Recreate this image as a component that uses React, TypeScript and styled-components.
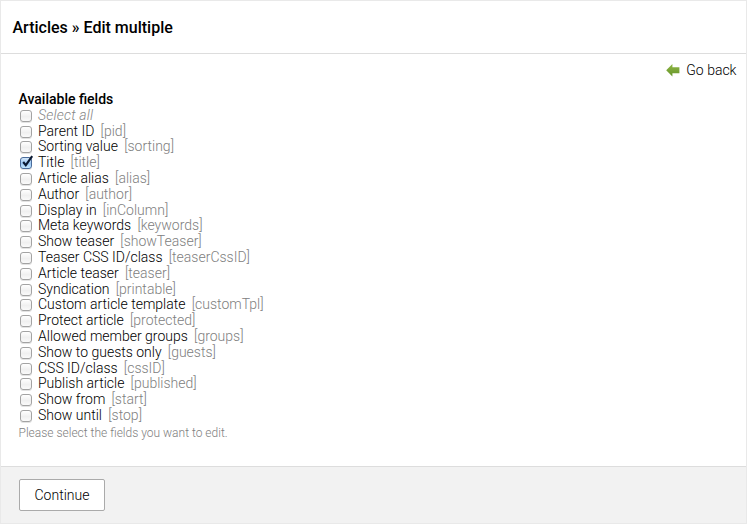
import React, { useState } from 'react';
import styled, { createGlobalStyle } from 'styled-components';

const GlobalStyle = createGlobalStyle`
  * { box-sizing: border-box; }
  html, body { margin: 0; padding: 0; }
  body {
    background: #fff;
    color: #000;
    font: 300 14px/15.8px Roboto, sans-serif;
  }
`;

const Page = styled.div`
  display: flex;
  flex-direction: column;
  width: 747px;
  height: 524px;
  border: 1px solid #e9e9e9;
`;

const Header = styled.header`
  display: flex;
  align-items: center;
  height: 53px;
  padding: 2px 0 0 11.5px;
  border-bottom: 1px solid #ddd;
`;

const Heading = styled.h1`
  margin: 0;
  font-size: 16px;
  font-weight: 500;
  line-height: 20px;
`;

const Toolbar = styled.nav`
  display: flex;
  justify-content: flex-end;
  padding: 8px 9.5px 0 0;
  height: 37px;
`;

const BackLink = styled.a`
  display: flex;
  align-items: flex-start;
  gap: 6px;
  color: #000;
  line-height: 16px;
  text-decoration: none;
  svg { margin-top: 2px; }
`;

const Fields = styled.fieldset`
  flex: 1;
  margin: 0;
  padding: 0 0 0 17.5px;
  border: 0;
`;

const Legend = styled.h2`
  margin: 0;
  height: 15.8px;
  font-size: 14px;
  font-weight: 500;
  line-height: 16px;
`;

const Row = styled.label`
  display: flex;
  align-items: flex-start;
  height: 15.8px;
  padding-left: 1.5px;
  white-space: pre;
`;

const Box = styled.input<{ $on: boolean }>`
  appearance: none;
  flex: none;
  width: 12px;
  height: 12px;
  margin: 3px 6px 0 0;
  border: 1px solid ${(p) => (p.$on ? '#4a6c9b' : '#a3a3a3')};
  border-radius: 3px;
  background: ${(p) =>
    p.$on
      ? 'linear-gradient(#d3e6f9, #9cc8f4 55%, #c5e8ff)'
      : 'linear-gradient(#fff, #f0f0f0 55%, #fafafa)'};
  box-shadow: 0 1px 0 #e3e3e3;
`;

const BoxWrap = styled.span`
  position: relative;
  display: flex;
`;

const Tick = styled.svg`
  position: absolute;
  left: 1px;
  top: 0;
  pointer-events: none;
`;

const Label = styled.span<{ $all?: boolean }>`
  padding-top: 1px;
  color: ${(p) => (p.$all ? '#858585' : '#000')};
  font-style: ${(p) => (p.$all ? 'italic' : 'normal')};
  letter-spacing: ${(p) => (p.$all ? '0.2px' : 'normal')};
`;

const Key = styled.span`
  padding-top: 1px;
  margin-left: 6.2px;
  color: #808080;
`;

const Hint = styled.p`
  margin: 2px 0 0;
  color: #808080;
  font-size: 12px;
  line-height: 16px;
`;

const Footer = styled.footer`
  display: flex;
  align-items: flex-start;
  height: 57px;
  padding: 12px 0 0 18px;
  border-top: 1px solid #ddd;
  background: #f2f2f2;
`;

const Submit = styled.button`
  width: 86px;
  height: 32px;
  padding: 0;
  border: 1px solid #aaa;
  border-radius: 2px;
  background: #fff;
  color: #000;
  font: 300 14px/16px Roboto, sans-serif;
`;

const fields: [string, string][] = [
  ['Parent ID', 'pid'],
  ['Sorting value', 'sorting'],
  ['Title', 'title'],
  ['Article alias', 'alias'],
  ['Author', 'author'],
  ['Display in', 'inColumn'],
  ['Meta keywords', 'keywords'],
  ['Show teaser', 'showTeaser'],
  ['Teaser CSS ID/class', 'teaserCssID'],
  ['Article teaser', 'teaser'],
  ['Syndication', 'printable'],
  ['Custom article template', 'customTpl'],
  ['Protect article', 'protected'],
  ['Allowed member groups', 'groups'],
  ['Show to guests only', 'guests'],
  ['CSS ID/class', 'cssID'],
  ['Publish article', 'published'],
  ['Show from', 'start'],
  ['Show until', 'stop'],
];

function Checkbox({ checked, onChange }: { checked: boolean; onChange: () => void }) {
  return (
    <BoxWrap>
      <Box type="checkbox" $on={checked} checked={checked} onChange={onChange} />
      {checked && (
        <Tick width="13" height="14" viewBox="0 0 13 14">
          <path d="M2.2 8 4.8 11.2 11.2 2.2" fill="none" stroke="#0b1a33" strokeWidth="2.1" />
        </Tick>
      )}
    </BoxWrap>
  );
}

export default function App() {
  const [selected, setSelected] = useState<string[]>(['title']);
  const all = selected.length === fields.length;
  const toggle = (key: string) =>
    setSelected((s) => (s.includes(key) ? s.filter((k) => k !== key) : [...s, key]));

  return (
    <Page>
      <GlobalStyle />
      <Header>
        <Heading>Articles » Edit multiple</Heading>
      </Header>
      <Toolbar>
        <BackLink href="#">
          <svg width="14" height="13" viewBox="0 0 14 13">
            <defs>
              <linearGradient id="leaf" x2="0" y2="1">
                <stop stopColor="#8fb544" />
                <stop offset="1" stopColor="#66962a" />
              </linearGradient>
            </defs>
            <path d="M.2 6.2 6.4 0v3.2h7v6h-7v3.2z" fill="url(#leaf)" />
          </svg>
          Go back
        </BackLink>
      </Toolbar>
      <Fields>
        <Legend>Available fields</Legend>
        <Row>
          <Checkbox checked={all} onChange={() => setSelected(all ? [] : fields.map((f) => f[1]))} />
          <Label $all>Select all</Label>
        </Row>
        {fields.map(([label, key]) => (
          <Row key={key}>
            <Checkbox checked={selected.includes(key)} onChange={() => toggle(key)} />
            <Label>{label}</Label>
            <Key>[{key}]</Key>
          </Row>
        ))}
        <Hint>Please select the fields you want to edit.</Hint>
      </Fields>
      <Footer>
        <Submit type="button">Continue</Submit>
      </Footer>
    </Page>
  );
}
